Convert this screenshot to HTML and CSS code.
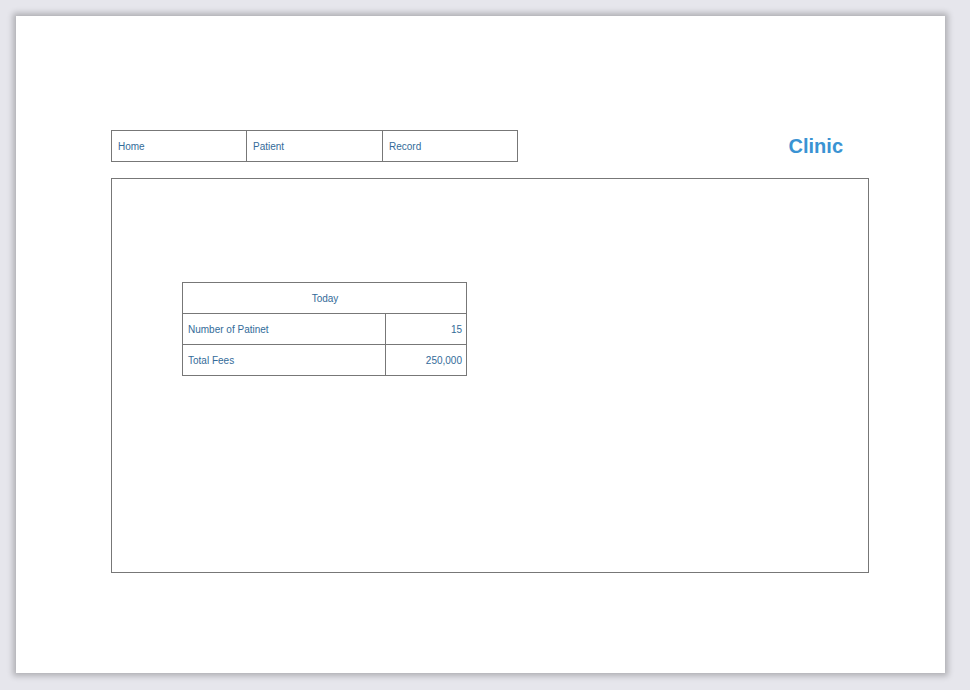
FILE: index.html
```html
<!DOCTYPE html>
<html>
<head>
<meta charset="utf-8">
<link rel="stylesheet" href="styles.css">
</head>
<body>
<div class="page">
  <div class="header">
    <nav class="nav">
      <div class="nav-item">Home</div>
      <div class="nav-item">Patient</div>
      <div class="nav-item">Record</div>
    </nav>
    <div class="brand">Clinic</div>
  </div>
  <div class="main">
    <table class="summary">
      <tr><td colspan="2" class="title">Today</td></tr>
      <tr><td class="label">Number of Patinet</td><td class="value">15</td></tr>
      <tr><td class="label">Total Fees</td><td class="value">250,000</td></tr>
    </table>
  </div>
</div>
</body>
</html>
```
FILE: styles.css
```css
html, body {
  margin: 0;
  padding: 0;
  background: #e6e6ec;
  font-family: "Liberation Sans", Arial, sans-serif;
}
body {
  padding: 16px 0 0 16px;
  height: 690px;
  box-sizing: border-box;
}
.page {
  width: 929px;
  height: 657px;
  background: #fff;
  box-shadow: 0 0 6px 3px rgba(0, 0, 0, 0.24);
  padding: 114px 0 0 95px;
  box-sizing: border-box;
}
.header {
  width: 758px;
  display: flex;
  justify-content: space-between;
  align-items: flex-start;
}
.nav {
  display: flex;
  border: 1px solid #777;
  height: 32px;
  box-sizing: border-box;
}
.nav-item {
  width: 136px;
  box-sizing: border-box;
  padding: 1px 0 0 6px;
  font-size: 10px;
  line-height: 30px;
  color: #336b99;
  border-left: 1px solid #777;
}
.nav-item:first-child {
  width: 134px;
  border-left: none;
}
.nav-item:last-child {
  width: 135px;
}
.brand {
  font-size: 20px;
  font-weight: bold;
  color: #3a93d3;
  padding: 1px 26px 0 0;
  line-height: 30px;
}
.main {
  margin-top: 16px;
  width: 758px;
  height: 395px;
  border: 1px solid #777;
  box-sizing: border-box;
  padding: 103px 0 0 70px;
}
.summary {
  border-collapse: collapse;
  width: 285px;
  font-size: 10px;
  color: #336b99;
}
.summary td {
  border: 1px solid #777;
  height: 31px;
  padding: 0 4px 0 5px;
  box-sizing: border-box;
}
.summary .title {
  text-align: center;
}
.summary .label {
  width: 203px;
}
.summary .value {
  text-align: right;
}
```
